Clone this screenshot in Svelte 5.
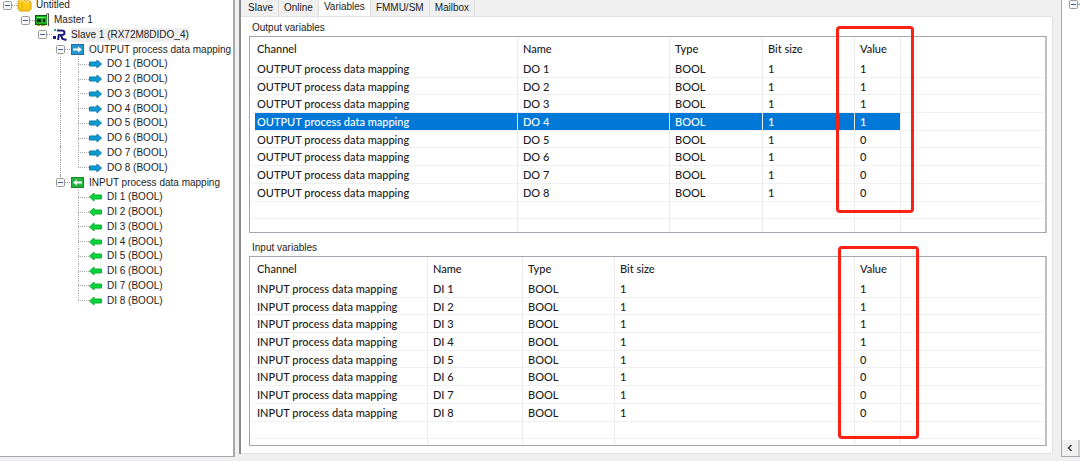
<script lang="ts">
    type Row = { name: string; value: number };

    let activeTab = $state("Variables");
    let selected = $state("DO 4");

    const tabs = ["Slave", "Online", "Variables", "FMMU/SM", "Mailbox"];

    const makeRows = (prefix: string): Row[] =>
        Array.from({ length: 8 }, (_, i) => ({ name: `${prefix} ${i + 1}`, value: i < 4 ? 1 : 0 }));

    const outputs = makeRows("DO");
    const inputs = makeRows("DI");

    const groups = [
        { id: "output", title: "Output variables", channel: "OUTPUT process data mapping", rows: outputs },
        { id: "input", title: "Input variables", channel: "INPUT process data mapping", rows: inputs },
    ];
</script>

{#snippet toggle()}
    <button class="toggle" aria-label="Collapse">
        <svg viewBox="0 0 9 9" width="9" height="9">
            <rect x="0.5" y="0.5" width="8" height="8" rx="1" fill="#f6f6f6" stroke="#9a9a9a" />
            <path d="M2 4.5h5" stroke="#4560a8" />
        </svg>
    </button>
{/snippet}

<div class="app">
    <div class="workspace">
        <nav class="side">
            <ul class="tree">
                <li class="depth0">
                    {@render toggle()}<i class="dash"></i>
                    <svg class="icon" viewBox="0 0 15 14">
                        <path d="M1 4 L3 1 H7 L8 3 H13 L14 5 V11 L12 13 H3 L1 11Z" fill="#fccb18" stroke="#d69c08" />
                        <path d="M2 5 L4 2 H6 L7 4 H12" fill="none" stroke="#ffec80" />
                        <path d="M5 5V12" stroke="#e5ae0c" />
                    </svg>
                    <span>Untitled</span>
                </li>
                <li class="depth1">
                    {@render toggle()}<i class="dash"></i>
                    <svg class="icon" viewBox="0 0 15 14">
                        <path d="M11 1.500 L13.500 0.500 V13" fill="none" stroke="#555" />
                        <rect x="0" y="2" width="12" height="10" fill="#1fae1f" />
                        <path d="M0 2.500h12M0.500 2v9M0 11.500h12" fill="none" stroke="#0a5c0a" />
                        <rect x="2" y="6" width="4" height="3" fill="#0b2e0b" />
                        <rect x="8" y="6" width="2" height="3" fill="#0b2e0b" />
                        <path d="M2 4.500h8" stroke="#5df05d" />
                        <path d="M2 12.500h3M6 12.500h4" stroke="#c8a000" />
                    </svg>
                    <span>Master 1</span>
                </li>
                <li class="depth2">
                    {@render toggle()}<i class="dash"></i>
                    <svg class="icon" viewBox="0 0 15 14">
                        <path d="M5 2.500 H9.500 C13.500 2.500 13.500 7 9.500 7 H7.500 M9 7.500 L10.500 11 L14.500 12" fill="none" stroke="#1b1b80" stroke-width="2" />
                        <path d="M7 6 L6 12" stroke="#1b1b80" stroke-width="2" />
                        <rect x="2" y="1" width="2" height="2" fill="#2ab860" />
                        <rect x="1" y="8" width="3" height="3" fill="#1b1b80" />
                    </svg>
                    <span class="current">Slave 1 (RX72M8DIDO_4)</span>
                </li>
                {#each groups as group, g}
                    <li class="depth3" class:trunk={g > 0}>
                        {@render toggle()}<i class="dash"></i>
                        <svg class="icon" class:flip={g > 0} viewBox="0 0 15 14">
                            <rect x="1.500" y="1.500" width="12" height="10" fill={g ? "#22b53c" : "#2496d2"} stroke={g ? "#158a2a" : "#1c6fa6"} />
                            <path d="M3 5.500H8V3.500L12 6.500L8 9.500V7.500H3Z" fill="#fff" />
                        </svg>
                        <span>{group.channel}</span>
                    </li>
                    {#each group.rows as row, i}
                        <li class="leaf" class:trunk={g === 0} class:last={i === group.rows.length - 1}>
                            <i class="branch"></i>
                            <svg class="arrow" class:flip={g > 0} viewBox="0 0 13 10">
                                <path d="M0.500 3H8V1L12.500 5L8 9V7H0.500Z" fill={g ? "#06d33c" : "#0c9ad0"} stroke={g ? "#10b034" : "#0a80b4"} />
                            </svg>
                            <span>{row.name} (BOOL)</span>
                        </li>
                    {/each}
                {/each}
            </ul>
        </nav>

        <main>
            <div class="tabs" role="tablist">
                {#each tabs as tab}
                    <button role="tab" aria-selected={activeTab === tab} onclick={() => (activeTab = tab)}>{tab}</button>
                {/each}
            </div>
            <div class="panel">
                {#each groups as group}
                    <h2 id="{group.id}-title">{group.title}</h2>
                    <div class="frame {group.id}">
                        <div class="list">
                            <table aria-labelledby="{group.id}-title">
                                <colgroup>
                                    <col class="channel" />
                                    <col class="name" />
                                    <col class="type" />
                                    <col class="bits" />
                                    <col class="value" />
                                    <col />
                                </colgroup>
                                <thead>
                                    <tr>
                                        <th>Channel</th>
                                        <th>Name</th>
                                        <th>Type</th>
                                        <th>Bit size</th>
                                        <th>Value</th>
                                        <th></th>
                                    </tr>
                                </thead>
                                <tbody>
                                    {#each group.rows as row}
                                        <tr class:selected={selected === row.name} onclick={() => (selected = row.name)}>
                                            <td>{group.channel}</td>
                                            <td>{row.name}</td>
                                            <td>BOOL</td>
                                            <td>1</td>
                                            <td>{row.value}</td>
                                            <td></td>
                                        </tr>
                                    {/each}
                                    <!-- empty grid rows below the data -->
                                    {#each [0, 1] as _}
                                        <tr><td></td><td></td><td></td><td></td><td></td><td></td></tr>
                                    {/each}
                                </tbody>
                            </table>
                        </div>
                        <div class="highlight"></div>
                    </div>
                {/each}
            </div>
        </main>

        <aside>
            <div class="aside-top">{@render toggle()}<i class="dash"></i></div>
            <div class="scrollbar">
                <button aria-label="Scroll left">
                    <svg viewBox="0 0 8 8" width="8" height="8"><path d="M5.500 1L2.500 4L5.500 7" fill="none" stroke="#444" stroke-width="1.700" /></svg>
                </button>
            </div>
        </aside>
    </div>
</div>

<style>
    :global(body) {
        margin: 0;
        background: #f0f0f0;
    }

    .app {
        box-sizing: border-box;
        height: 100vh;
        padding-bottom: 4px;
        overflow: hidden;
        background: #f0f0f0;
        color: #1c1c1c;
        font: 10px/14px "Liberation Sans", Arial, sans-serif;
    }

    .workspace {
        display: flex;
        height: 100%;
    }

    button {
        padding: 0;
        border: 0;
        background: none;
        color: inherit;
        font: inherit;
    }

    .side {
        box-sizing: border-box;
        flex: 0 0 235px;
        border-right: 2px solid #a5a8ae;
        border-bottom: 1px solid #a5a8ae;
        background: #fff;
        overflow: hidden;
    }

    .tree {
        display: grid;
        grid-auto-rows: 1fr;
        height: 310px;
        margin: -2px 0 0;
        padding: 0;
        list-style: none;
    }

    .tree li {
        position: relative;
        display: flex;
        align-items: center;
        white-space: nowrap;
    }

    .depth0 { padding-left: 3px; }
    .depth1 { padding-left: 21px; }
    .depth2 { padding-left: 38px; }
    .depth3 { padding-left: 56px; }
    .leaf { padding-left: 78px; }

    .toggle {
        display: flex;
        flex: none;
    }

    .dash {
        width: 5px;
        border-top: 1px dotted #999;
    }

    .icon {
        width: 15px;
        height: 14px;
        margin-right: 4px;
    }

    .arrow {
        width: 13px;
        height: 10px;
        margin-right: 5px;
    }

    .flip {
        transform: scaleX(-1);
    }

    .branch {
        align-self: stretch;
        width: 11px;
        background:
            repeating-linear-gradient(90deg, #aaa 0 1px, transparent 1px 2px) 0 50% / 100% 1px no-repeat,
            repeating-linear-gradient(#aaa 0 1px, transparent 1px 2px) 0 0 / 1px 100% no-repeat;
    }

    .last .branch {
        background-size: 100% 1px, 1px 50%;
    }

    .trunk::before {
        content: "";
        position: absolute;
        top: 0;
        bottom: 0;
        left: 60px;
        border-left: 1px dotted #999;
    }

    .depth3.trunk::before {
        bottom: 75%;
    }

    .current {
        background: #efefef;
    }

    main {
        flex: 1;
        display: flex;
        flex-direction: column;
        min-width: 0;
        margin: 0 8px 3px 4px;
        border-left: 2px solid #8b8b8b;
    }

    .tabs {
        display: flex;
        height: 16px;
        padding-left: 2px;
    }

    .tabs button {
        padding: 0 5px;
        border-right: 1px solid #dcdcdc;
    }

    .tabs button[aria-selected="true"] {
        padding-bottom: 3px;
        margin-bottom: -1px;
        background: #fff;
    }

    .panel {
        flex: 1;
        display: flex;
        flex-direction: column;
        min-height: 0;
        padding: 4px 5px 7px 8px;
        border: 1px solid #e2e2e2;
        border-left: 0;
        background: #fff;
    }

    h2 {
        margin: 0;
        padding: 0 3px 1px;
        font: inherit;
    }

    .frame {
        position: relative;
        flex: 197 1 0;
        min-height: 0;
    }

    .frame + h2 {
        margin-top: 8px;
    }

    .frame.input {
        flex-grow: 190;
    }

    .list {
        box-sizing: border-box;
        height: 100%;
        border: 1px solid #a3a6ae;
        border-right: 2px solid #bcc0c6;
        overflow: hidden;
    }

    table {
        width: 100%;
        height: 200px;
        border-spacing: 0;
        table-layout: fixed;
        font: 500 11px/14px Lato, sans-serif;
    }

    .channel { width: 268px; }
    .name { width: 152px; }
    .type { width: 93px; }
    .bits { width: 92px; }
    .value { width: 46px; }

    .input .channel { width: 178px; }
    .input .name { width: 95px; }
    .input .type { width: 92px; }
    .input .bits { width: 240px; }

    th,
    td {
        padding: 1px 0 0 5px;
        border-right: 1px solid #ececec;
        text-align: left;
        font-weight: inherit;
        white-space: nowrap;
    }

    th {
        height: 22px;
    }

    td {
        height: 15px;
        border-bottom: 1px solid #f0f0f0;
    }

    th:first-child,
    td:first-child {
        padding-left: 2px;
        border-left: 5px solid #fff;
    }

    th:last-child,
    td:last-child {
        border-right: 0;
    }

    .selected td:not(:last-child) {
        background: #0078d7;
        background-clip: padding-box;
        color: #fff;
    }

    .highlight {
        position: absolute;
        top: -10px;
        left: 587px;
        width: 72px;
        height: 181px;
        border: 3px solid #fb2113;
        border-radius: 4px;
        pointer-events: none;
    }

    .input .highlight {
        left: 589px;
        width: 75px;
        height: 187px;
    }

    aside {
        box-sizing: border-box;
        flex: 0 0 19px;
        display: flex;
        flex-direction: column;
        justify-content: space-between;
        border: solid #a5a8ae;
        border-width: 0 0 1px 1px;
        background: #fff;
        overflow: hidden;
    }

    .aside-top {
        display: flex;
        align-items: center;
        padding-left: 7px;
    }

    .scrollbar {
        display: flex;
        height: 16px;
        background: #cdcdcd;
    }

    .scrollbar button {
        display: grid;
        place-items: center;
        width: 16px;
        background: #f0f0f0;
    }
</style>
